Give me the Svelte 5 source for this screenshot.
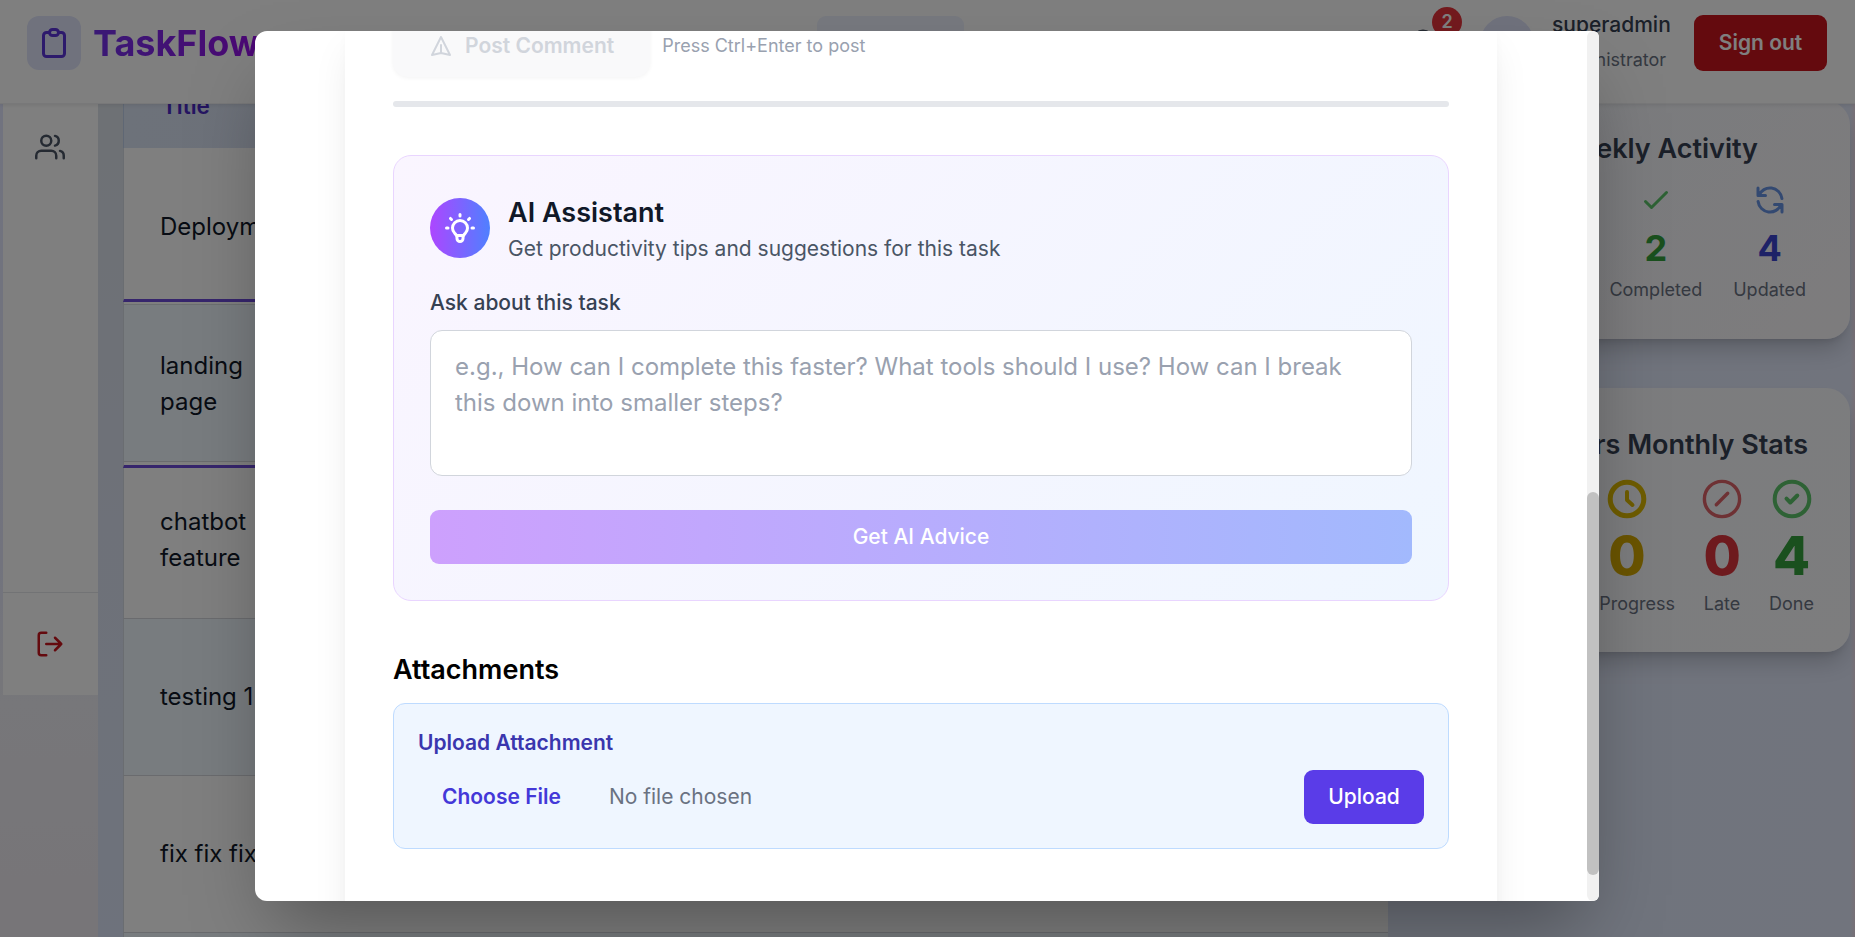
<script>
  const rows = [
    { title: 'Deployment', height: 154, shift: 3, marked: true },
    { title: 'landing page', height: 166, shift: 0, marked: true, alt: true },
    { title: 'chatbot feature', height: 151, shift: -3 },
    { title: 'testing 1', height: 157, shift: 0, alt: true },
    { title: 'fix fix fix', height: 157, shift: 0 },
    { title: '', height: 157, shift: 0, alt: true }
  ];
</script>

<div class="page">
  <header>
    <div class="brand">
      <span class="logo">
        <svg width="36" height="36" viewBox="0 0 24 24"><path d="M9 5H7a2 2 0 00-2 2v12a2 2 0 002 2h10a2 2 0 002-2V7a2 2 0 00-2-2h-2M9 5a2 2 0 002 2h2a2 2 0 002-2M9 5a2 2 0 012-2h2a2 2 0 012 2" /></svg>
      </span>
      <span class="name">TaskFlow</span>
    </div>
    <div class="nav-item"></div>
    <div class="account">
      <span class="bell">
        <svg width="36" height="36" viewBox="0 0 24 24"><path d="M18 8A6 6 0 0 0 6 8c0 7-3 9-3 9h18s-3-2-3-9M13.73 21a2 2 0 0 1-3.46 0" /></svg>
        <b>2</b>
      </span>
      <span class="avatar"></span>
      <div class="who"><span>superadmin</span><small>Administrator</small></div>
      <button class="signout">Sign out</button>
    </div>
  </header>

  <div class="body">
    <aside>
      <div class="side-top">
        <svg width="30" height="30" viewBox="0 0 24 24"><path d="M17 21v-2a4 4 0 0 0-4-4H5a4 4 0 0 0-4 4v2" /><circle cx="9" cy="7" r="4" /><path d="M23 21v-2a4 4 0 0 0-3-3.87M16 3.13a4 4 0 0 1 0 7.75" /></svg>
      </div>
      <div class="side-bottom">
        <svg width="30" height="30" viewBox="0 0 24 24"><path d="M9 21H5a2 2 0 0 1-2-2V5a2 2 0 0 1 2-2h4M16 17l5-5-5-5M21 12H9" /></svg>
      </div>
    </aside>

    <main>
      <div class="thead"><span>Title</span></div>
      {#each rows as row}
        <div class="row" class:alt={row.alt} class:marked={row.marked} style="height: {row.height}px">
          <span style="margin-top: {row.shift * 2}px">{row.title}</span>
        </div>
      {/each}
    </main>

    <div class="stats">
      <section class="weekly">
        <h3>Weekly Activity</h3>
        <div class="cells">
          <div class="cell green">
            <svg width="36" height="36" viewBox="0 0 24 24"><path d="M5 13l4 4L19 7" /></svg>
            <strong>2</strong><small>Completed</small>
          </div>
          <div class="cell blue">
            <svg width="36" height="36" viewBox="0 0 24 24"><path d="M4 4v5h.582m15.356 2A8.001 8.001 0 004.582 9m0 0H9m11 11v-5h-.581m0 0a8.003 8.003 0 01-15.357-2m15.357 2H15" /></svg>
            <strong>4</strong><small>Updated</small>
          </div>
        </div>
      </section>
      <section class="monthly">
        <h3>Users Monthly Stats</h3>
        <div class="cells">
          <div class="cell yellow">
            <svg width="40" height="40" viewBox="-20 -20 40 40" stroke-width="5"><circle r="16.8" /><path stroke-width="4" d="M0-7V1L5.5 6" /></svg>
            <strong>0</strong><small>In Progress</small>
          </div>
          <div class="cell red">
            <svg width="40" height="40" viewBox="-20 -20 40 40" stroke-width="3.4"><circle r="17.6" /><path d="M-5.7 5.7L5.7-5.7" /></svg>
            <strong>0</strong><small>Late</small>
          </div>
          <div class="cell green">
            <svg width="40" height="40" viewBox="-20 -20 40 40" stroke-width="4"><circle r="17.3" /><path d="M-5.5-.3L-1.7 3.5 5.3-3.5" /></svg>
            <strong>4</strong><small>Done</small>
          </div>
        </div>
      </section>
    </div>
  </div>

  <div class="overlay">
    <div class="modal">
      <div class="sheet">
        <div class="post">
          <button class="post-btn" disabled>
            <svg width="24" height="24" viewBox="0 0 24 24"><path d="M12 19l9 2-9-18-9 18 9-2zm0 0v-8" /></svg>
            Post Comment
          </button>
          <span>Press Ctrl+Enter to post</span>
        </div>
        <div class="rule"></div>

        <section class="ai">
          <div class="ai-head">
            <span class="bulb">
              <svg width="36" height="36" viewBox="0 0 24 24"><path d="M9.663 17h4.673M12 3v1m6.364 1.636l-.707.707M21 12h-1M4 12H3m3.343-5.657l-.707-.707m2.828 9.9a5 5 0 117.072 0l-.548.547A3.374 3.374 0 0014 18.469V19a2 2 0 11-4 0v-.531c0-.895-.356-1.754-.988-2.386l-.548-.547z" /></svg>
            </span>
            <div>
              <h2>AI Assistant</h2>
              <p>Get productivity tips and suggestions for this task</p>
            </div>
          </div>
          <label for="question">Ask about this task</label>
          <textarea id="question" placeholder="e.g., How can I complete this faster? What tools should I use? How can I break this down into smaller steps?"></textarea>
          <button class="advice" disabled>Get AI Advice</button>
        </section>

        <h2 class="attach-title">Attachments</h2>
        <section class="upload">
          <div class="upload-label">Upload Attachment</div>
          <div class="upload-row">
            <span class="choose">Choose File</span>
            <span class="nofile">No file chosen</span>
            <button class="upload-btn">Upload</button>
          </div>
        </section>
      </div>
      <div class="track"><div class="thumb"></div></div>
    </div>
  </div>
</div>

<style>
  :global(body) { margin: 0; overflow: hidden; }
  .page, .page * { box-sizing: border-box; }
  .page {
    position: relative;
    width: 1855px;
    height: 937px;
    overflow: hidden;
    font-family: Inter, "Liberation Sans", sans-serif;
    font-size: 24px;
    line-height: 36px;
    color: #101828;
    background: linear-gradient(180deg, #e2e6ff 0%, #e4e7fb 60%, #eeeef4 75%, #efeaf0 100%);
  }
  svg { display: block; fill: none; stroke: currentColor; stroke-linecap: round; stroke-linejoin: round; flex: none; }
  svg:not([stroke-width]) { stroke-width: 2; }
  h2, h3, p { margin: 0; }
  button { border: 0; font: inherit; padding: 0; }

  header {
    position: relative;
    z-index: 1;
    display: flex;
    align-items: flex-start;
    height: 104px;
    padding: 0 28px 0 27px;
    background: #fff;
    border-bottom: 1px solid #f0f1f3;
    box-shadow: 0 1px 4px rgba(0, 0, 0, .1);
  }
  .brand { display: flex; align-items: center; gap: 12px; width: 790px; margin-top: 16px; height: 54px; }
  .logo { display: grid; place-items: center; width: 54px; height: 54px; border-radius: 12px; background: #e0e4fb; color: #5b34d9; }
  .name {
    font-size: 36px; font-weight: 700; line-height: 54px;
    background: linear-gradient(90deg, #7432ea, #9810e8);
    background-clip: text; -webkit-background-clip: text; color: transparent;
  }
  .nav-item { width: 147px; height: 54px; margin-top: 16px; border-radius: 9px; background: #eef2ff; }
  .account { display: flex; margin-left: auto; }
  .bell { position: relative; width: 36px; height: 36px; margin: 28px 39px 0 0; color: #4a5565; }
  .bell b {
    position: absolute; left: 27px; top: -21px; width: 30px; height: 30px; border-radius: 50%;
    background: #e7353c; color: #fff; font-size: 18px; font-weight: 600; line-height: 30px; text-align: center;
  }
  .avatar { width: 54px; height: 54px; margin: 16px 18px 0 0; border-radius: 50%; background: #e0e4fb; }
  .who { display: flex; flex-direction: column; gap: 8px; width: 118px; margin: 10px 24px 0 0; font-size: 21px; font-weight: 500; line-height: 30px; color: #364153; }
  .who small { font-size: 18px; font-weight: 400; line-height: 24px; color: #6a7282; }
  .signout { width: 133px; height: 56px; margin-top: 15px; border-radius: 9px; background: #c9141d; color: #fff; font-size: 21px; font-weight: 600; }

  .body { display: flex; align-items: flex-start; height: 833px; padding-left: 3px; }
  aside { width: 95px; height: 591px; background: #fff; display: flex; flex-direction: column; }
  .side-top { flex: 1; padding: 28px 0 0 32px; color: #4a5565; }
  .side-bottom { height: 103px; padding: 36px 0 0 32px; border-top: 1px solid #e5e7eb; color: #c9141d; }
  main { position: relative; width: 1290px; height: 833px; overflow: hidden; padding-left: 25px; background: linear-gradient(180deg, #dde3ea, #dce3f2 50%, #dde5f8); }
  .thead { height: 44px; padding: 0 0 0 38px; border-left: 1px solid #bfcfe8; background: linear-gradient(90deg, #dbe4f4, #d9dcf0); color: #4a2bc4; font-size: 22.5px; font-weight: 600; line-height: 4px; }
  .row { display: flex; align-items: center; padding-left: 36px; background: #fff; border-left: 1px solid #d5dae2; border-bottom: 1px solid #d5d7dc; }
  .row.alt { background: #f0f9ff; }
  .row.marked { border-bottom: 3px solid #6d4bd8; }
  .row.marked.alt { background: linear-gradient(180deg, #fff 2px, #d9dee3 2px, #d9dee3 3px, #f0f9ff 3px, #f0f9ff 159px, #d5d7dc 159px, #d5d7dc 160px, #fff 160px); }
  .row span { width: 130px; }

  .stats { flex: 1; height: 833px; padding-right: 5px; background: linear-gradient(90deg, #e0e8fa, #e2e8fa 99%, #efdfec 100%); }
  .stats section { height: 264px; border-radius: 24px; background: linear-gradient(135deg, #f7f9fc, #fafafc); box-shadow: 0 15px 22px -5px rgba(0, 0, 0, .18), 0 6px 9px -6px rgba(0, 0, 0, .16); overflow: hidden; }
  .stats .weekly { height: 238px; margin: -3px 0 49px; padding-top: 27px; background: linear-gradient(135deg, #f3f7fc, #fbf8fb); }
  .stats h3 { font-size: 27px; font-weight: 600; line-height: 42px; color: #364153; text-align: right; }
  .weekly h3 { padding-right: 92px; }
  .monthly { padding-top: 36px; }
  .monthly h3 { padding-right: 42px; }
  .cells { display: flex; justify-content: flex-end; }
  .cell { display: flex; flex-direction: column; align-items: center; }
  .cell small { font-size: 18px; line-height: 24px; color: #6a7282; white-space: nowrap; }
  .weekly .cells { gap: 31px; padding: 12px 44px 0 0; }
  .weekly strong { margin: 9px 0; font-size: 36px; font-weight: 700; line-height: 42px; }
  .monthly .cells { gap: 27px; padding: 13px 36px 0 0; }
  .monthly strong { margin: 10px 0 9px; font-size: 54px; font-weight: 800; line-height: 54px; }
  .green { color: #34a03c; } .green svg { color: #5cc46a; }
  .blue { color: #3a45cf; } .blue svg { color: #6792e2; }
  .yellow { color: #d4a800; } .yellow svg { color: #dcb800; }
  .red { color: #dc353c; } .red svg { color: #dc6268; }

  .overlay { position: absolute; inset: 0; z-index: 5; background: rgba(0, 0, 0, .5); }
  .modal {
    position: absolute; left: 255px; top: 31px; display: flex; justify-content: flex-end;
    width: 1344px; height: 870px; overflow: hidden; border-radius: 12px 6px 6px 12px; background: #fff;
  }
  .overlay::before {
    content: ""; position: absolute; left: 255px; top: 31px; width: 1344px; height: 870px;
    border-radius: 12px; box-shadow: 0 38px 75px -18px rgba(0, 0, 0, .35);
  }
  .sheet { width: 1152px; height: 940px; margin: -16px 102px 0 0; padding: 0 48px; background: #fff; box-shadow: 0 30px 38px -8px rgba(0, 0, 0, .1), 0 12px 15px -9px rgba(0, 0, 0, .1); flex: none; }
  .post { display: flex; align-items: center; gap: 12px; height: 62px; font-size: 18px; line-height: 24px; color: #99a1af; }
  .post-btn { display: flex; align-items: center; gap: 12px; height: 62px; padding: 0 36px; border-radius: 15px; background: #f9f9fa; box-shadow: 0 1px 4px rgba(0, 0, 0, .05); color: #d1d5dc; font-size: 21px; font-weight: 600; }
  .rule { height: 6px; margin: 24px 0 48px; border-radius: 3px; background: #e5e7eb; }
  .ai { height: 446px; padding: 36px; border: 1px solid #e9d5ff; border-radius: 18px; background: linear-gradient(135deg, #faf5ff, #eff6ff); }
  .ai-head { display: flex; align-items: center; gap: 18px; height: 72px; }
  .bulb { display: grid; place-items: center; width: 60px; height: 60px; border-radius: 50%; background: linear-gradient(90deg, #ad46ff, #4f80ff); color: #fff; }
  h2 { font-size: 27px; font-weight: 600; line-height: 42px; }
  .ai p { font-size: 21px; line-height: 30px; color: #4a5565; }
  label { display: block; margin: 24px 0 12px; font-size: 21px; font-weight: 500; line-height: 30px; color: #364153; }
  textarea { display: block; width: 100%; height: 146px; padding: 18px 24px; border: 1px solid #d1d5dc; border-radius: 12px; background: #fff; font: inherit; resize: none; outline: none; }
  textarea::placeholder { color: #99a1af; }
  .advice { width: 100%; height: 54px; margin-top: 34px; border-radius: 9px; background: linear-gradient(90deg, #cda0fd, #a2b9fd); color: #fff; font-size: 21px; font-weight: 500; }
  .attach-title { margin: 48px 0 12px; color: #000; }
  .upload { height: 146px; padding: 24px; border: 1px solid #bedbff; border-radius: 12px; background: #eff6ff; font-size: 21px; line-height: 30px; }
  .upload-label { margin-bottom: 12px; font-weight: 600; color: #3a36ae; }
  .upload-row { display: flex; align-items: center; height: 54px; }
  .choose { padding: 0 24px; font-weight: 600; color: #4338d8; }
  .nofile { margin-left: 24px; color: #6a7282; }
  .upload-btn { width: 120px; height: 54px; margin-left: auto; border-radius: 9px; background: #5a3ce8; color: #fff; font-size: 21px; font-weight: 500; }
  .track { position: absolute; right: 0; top: 0; width: 12px; height: 870px; padding-top: 461px; background: #f1f1f1; border-radius: 6px; }
  .thumb { height: 383px; border-radius: 6px; background: #c1c1c1; }
</style>
